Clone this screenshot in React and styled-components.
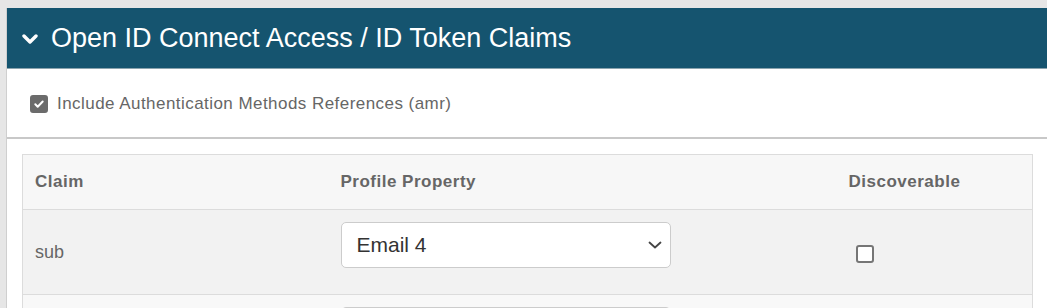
import React from 'react';
import styled, { createGlobalStyle } from 'styled-components';

const GlobalStyle = createGlobalStyle`
  html, body {
    margin: 0;
    padding: 0;
    background: #e6e6e6;
    font-family: "Liberation Sans", Arial, sans-serif;
  }
`;

const claims = [
  { claim: 'sub', property: 'Email 4', discoverable: false },
  { claim: 'email', property: 'Email', discoverable: true },
];

const App = () => {
  return (
    <Page>
      <GlobalStyle />
      <Panel>
        <PanelHeader>
          <Chevron viewBox="0 0 16 10" aria-hidden="true">
            <path d="M2 2l6 6 6-6" fill="none" stroke="#fff" strokeWidth="3.4" strokeLinecap="round" strokeLinejoin="round" />
          </Chevron>
          <Title>Open ID Connect Access / ID Token Claims</Title>
        </PanelHeader>
        <Options>
          <CheckLabel>
            <Box checked>
              <svg viewBox="0 0 12 12" width="12" height="12" aria-hidden="true">
                <path d="M2.3 6.3l2.4 2.4 5-5.2" fill="none" stroke="#fff" strokeWidth="2" strokeLinecap="round" strokeLinejoin="round" />
              </svg>
            </Box>
            Include Authentication Methods References (amr)
          </CheckLabel>
        </Options>
        <TableWrap>
          <Table>
            <colgroup>
              <col style={{ width: 306 }} />
              <col style={{ width: 508 }} />
              <col />
            </colgroup>
            <thead>
              <tr>
                <Th>Claim</Th>
                <Th>Profile Property</Th>
                <Th>Discoverable</Th>
              </tr>
            </thead>
            <tbody>
              {claims.map((c, i) => (
                <Row key={c.claim} odd={i % 2 === 0}>
                  <Td>{c.claim}</Td>
                  <Td>
                    <SelectBox>
                      <span>{c.property}</span>
                      <svg viewBox="0 0 14 8" width="14" height="8" aria-hidden="true">
                        <path d="M1.5 1.5l5.5 5 5.5-5" fill="none" stroke="#444" strokeWidth="1.8" strokeLinecap="round" strokeLinejoin="round" />
                      </svg>
                    </SelectBox>
                  </Td>
                  <CheckCell>
                    <Box checked={c.discoverable}>
                      {c.discoverable && (
                        <svg viewBox="0 0 12 12" width="11" height="11" aria-hidden="true">
                          <path d="M2.3 6.3l2.4 2.4 5-5.2" fill="none" stroke="#fff" strokeWidth="2" strokeLinecap="round" strokeLinejoin="round" />
                        </svg>
                      )}
                    </Box>
                  </CheckCell>
                </Row>
              ))}
            </tbody>
          </Table>
        </TableWrap>
      </Panel>
    </Page>
  );
};

export default App;

const Page = styled.div`
  padding: 8px 0 0 6px;
  min-height: 300px;
`;

const Panel = styled.div`
  background: #fff;
  border-left: 1px solid #cfcfcf;
`;

const PanelHeader = styled.div`
  display: flex;
  align-items: center;
  height: 61px;
  padding-left: 15px;
  background: #15546f;
  border-bottom: 1px solid #8aa3ae;
  box-sizing: border-box;
`;

const Chevron = styled.svg`
  width: 16px;
  height: 10px;
  margin-right: 13px;
  margin-top: 1px;
`;

const Title = styled.h2`
  margin: 0;
  font-size: 27px;
  font-weight: 400;
  color: #fff;
`;

const Options = styled.div`
  height: 70px;
  display: flex;
  align-items: center;
  padding-left: 23px;
  border-bottom: 2px solid #c8c8c8;
  box-sizing: border-box;
`;

const CheckLabel = styled.label`
  display: flex;
  align-items: center;
  gap: 9px;
  font-size: 17px;
  letter-spacing: 0.45px;
  color: #666;
  margin-top: 1px;
`;

const Box = styled.span`
  display: inline-flex;
  align-items: center;
  justify-content: center;
  width: 18px;
  height: 18px;
  box-sizing: border-box;
  border-radius: 3px;
  background: ${p => (p.checked ? '#6b6b6b' : '#fff')};
  border: 2px solid ${p => (p.checked ? '#6b6b6b' : '#767676')};
`;

const TableWrap = styled.div`
  padding: 15px 15px 0 15px;
`;

const Table = styled.table`
  width: 1011px;
  border-collapse: collapse;
  table-layout: fixed;
  border: 1px solid #dcdcdc;
`;

const Th = styled.th`
  height: 54px;
  padding: 0 12px;
  text-align: left;
  font-size: 17px;
  letter-spacing: 0.5px;
  font-weight: 700;
  color: #666;
  background: #f7f7f7;
  border-bottom: 1px solid #dcdcdc;
`;

const Row = styled.tr`
  background: ${p => (p.odd ? '#f2f2f2' : '#f8f8f8')};
  border-bottom: 1px solid #dcdcdc;
`;

const Td = styled.td`
  height: 84px;
  padding: 12px 12px;
  box-sizing: border-box;
  font-size: 18px;
  color: #666;
  vertical-align: middle;
`;

const CheckCell = styled(Td)`
  padding-left: 19px;
  padding-top: 21px;
`;

const SelectBox = styled.div`
  display: flex;
  align-items: center;
  justify-content: space-between;
  width: 330px;
  height: 46px;
  box-sizing: border-box;
  margin-bottom: 14px;
  padding: 0 8px 0 15px;
  background: #fff;
  border: 1px solid #cccccc;
  border-radius: 5px;
  font-size: 21px;
  color: #333;
`;
